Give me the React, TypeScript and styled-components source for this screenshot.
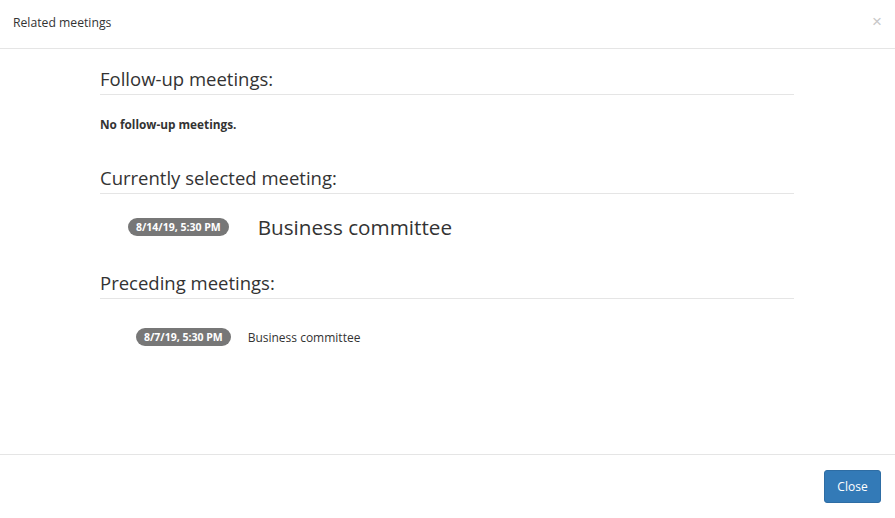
import styled, { createGlobalStyle } from 'styled-components'

const GlobalStyle = createGlobalStyle`
  html, body {
    margin: 0;
    padding: 0;
    background: #fff;
  }
  body {
    font-family: 'Open Sans', 'Noto Sans', sans-serif;
    color: #333;
  }
`

type Meeting = { date: string; title: string }

const preceding: Meeting[] = [{ date: '8/7/19, 5:30 PM', title: 'Business committee' }]

export default function App() {
  return (
    <>
      <GlobalStyle />
      <Modal>
        <Header>
          <Title>Related meetings</Title>
          <CloseX aria-label="Close">×</CloseX>
        </Header>

        <Body>
          <Container>
            <SectionHeading>Follow-up meetings:</SectionHeading>
            <EmptyNote>No follow-up meetings.</EmptyNote>

            <SectionHeading $top={34}>Currently selected meeting:</SectionHeading>
            <MeetingRow $indent={28} $gap={29} $top={21}>
              <Badge>8/14/19, 5:30 PM</Badge>
              <MeetingTitle $large>Business committee</MeetingTitle>
            </MeetingRow>

            <SectionHeading $top={33}>Preceding meetings:</SectionHeading>
            {preceding.map((m) => (
              <MeetingRow key={m.date} $indent={36} $gap={17} $top={29}>
                <Badge>{m.date}</Badge>
                <MeetingTitle>{m.title}</MeetingTitle>
              </MeetingRow>
            ))}
          </Container>
        </Body>

        <Footer>
          <Button>Close</Button>
        </Footer>
      </Modal>
    </>
  )
}

const Modal = styled.div`
  width: 895px;
  height: 518px;
  display: flex;
  flex-direction: column;
  background: #fff;
`

const Header = styled.header`
  flex: none;
  display: flex;
  align-items: center;
  justify-content: space-between;
  padding: 0 13px 0 13px;
  border-bottom: 1px solid #e5e5e5;
  box-sizing: border-box;
  height: 49px;
`

const Title = styled.h4`
  margin: 0;
  font-size: 12.2px;
  font-weight: 400;
  color: #333;
  margin-top: -4px;
`

const CloseX = styled.button`
  border: 0;
  background: none;
  padding: 0;
  font-family: 'Liberation Sans', Arial, sans-serif;
  font-size: 17px;
  line-height: 1;
  color: #c8c8c8;
  margin-top: -5px;
  cursor: pointer;
`

const Body = styled.main`
  flex: 1;
  padding-top: 19px;
  border-bottom: 1px solid #e5e5e5;
`

const Container = styled.div`
  width: 694px;
  margin-left: 100px;
`

const SectionHeading = styled.h3<{ $top?: number }>`
  margin: ${(p) => p.$top ?? 0}px 0 0;
  font-size: 18.5px;
  font-weight: 400;
  line-height: 22px;
  color: #333;
  padding-bottom: 4px;
  border-bottom: 1px solid #e5e5e5;
`

const EmptyNote = styled.p`
  margin: 21px 0 0;
  font-size: 11.8px;
  font-weight: 700;
  line-height: 17px;
  color: #333;
`

const MeetingRow = styled.div<{ $indent: number; $gap: number; $top: number }>`
  display: flex;
  align-items: center;
  margin-top: ${(p) => p.$top}px;
  padding-left: ${(p) => p.$indent}px;
  gap: ${(p) => p.$gap}px;
`

const Badge = styled.span`
  display: inline-block;
  background: #777;
  color: #fff;
  font-size: 10.5px;
  font-weight: 700;
  line-height: 18px;
  padding: 0 8px;
  border-radius: 10px;
  white-space: nowrap;
`

const MeetingTitle = styled.span<{ $large?: boolean }>`
  font-size: ${(p) => (p.$large ? '20.7px' : '12px')};
  line-height: ${(p) => (p.$large ? '24px' : '17px')};
  color: #333;
`

const Footer = styled.footer`
  flex: none;
  height: 63px;
  display: flex;
  align-items: center;
  justify-content: flex-end;
  padding: 0 14px;
`

const Button = styled.button`
  font-family: 'Open Sans', 'Noto Sans', sans-serif;
  font-size: 12px;
  color: #fff;
  background: #337ab7;
  border: 1px solid #2e6da4;
  border-radius: 3px;
  width: 57px;
  height: 33px;
  padding: 0;
  cursor: pointer;
`
